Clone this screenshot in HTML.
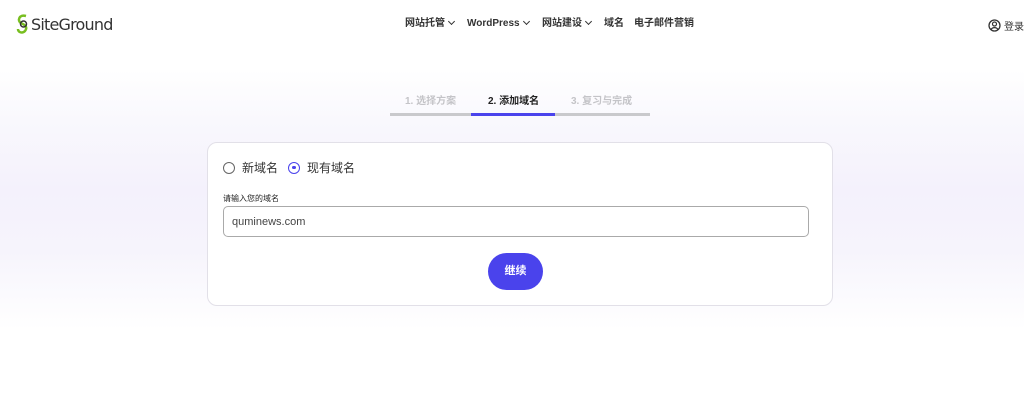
<!DOCTYPE html>
<html><head><meta charset="utf-8">
<style>
*{box-sizing:border-box;margin:0;padding:0}
html,body{width:1024px;height:409px;overflow:hidden}
body{font-family:"Liberation Sans","Noto Sans CJK SC",sans-serif;color:#222;
background:linear-gradient(to bottom,#fff 0,#fff 70px,#f9f8fd 120px,#f4f1fc 190px,#f6f4fc 250px,#fff 330px,#fff 409px);position:relative}
.logo{position:absolute;left:16px;top:13px;display:flex;align-items:center}
.logo span{font-family:"DejaVu Sans",sans-serif;font-size:16px;color:#333;letter-spacing:-0.8px;margin-left:1px;font-weight:normal}
.nav{position:absolute;top:17px;left:405px;font-size:10px;color:#333;font-weight:bold}
.nav div{position:absolute;white-space:nowrap;height:14px;line-height:14px;top:0}
.chev{display:inline-block;width:5px;height:5px;border-right:1.3px solid #333;border-bottom:1.3px solid #333;transform:rotate(45deg);margin-left:4px;position:relative;top:-2px}
.login{position:absolute;right:0;top:18px;font-size:10px;display:flex;align-items:center;gap:3px;color:#333}
.steps{position:absolute;top:95px;left:391px;width:259px;height:24px;font-size:10px;font-weight:bold}
.steps div{position:absolute;top:0;line-height:14px}
.bar{position:absolute;top:113px;height:3px}
.card{position:absolute;left:207px;top:142px;width:626px;height:164px;background:#fff;border:1px solid #e2e0e8;border-radius:10px}
.radio{position:absolute;top:159px;font-size:12px;display:flex;align-items:center;color:#333}
.rc{width:12px;height:12px;border-radius:50%;border:1.3px solid #666;margin-right:7px;position:relative}
.rc.on{border-color:#4a43ec}
.rc.on:after{content:"";position:absolute;left:3px;top:3px;width:3.5px;height:3.5px;border-radius:50%;background:#4a43ec}
.lbl{position:absolute;left:223px;top:193px;font-size:8px;color:#222}
.inp{position:absolute;left:223px;top:206px;width:586px;height:31px;border:1px solid #aaa;border-radius:5px;font-size:11px;color:#444;padding:9px 0 0 8px;background:#fff}
.btn{position:absolute;left:488px;top:253px;width:55px;height:37px;border-radius:19px;background:#4a43ec;color:#fff;font-size:11px;font-weight:bold;text-align:center;line-height:37px}
</style></head><body>
<div class="logo">
<svg width="14" height="22" viewBox="0 0 14 22"><path d="M10 3 C3 1 1 8 5 10 C9 12 12 14 9 18 C6 21 2 19 2 16" fill="none" stroke="#78be20" stroke-width="2.5"/><circle cx="7.5" cy="11" r="3" fill="none" stroke="#333" stroke-width="1.5"/></svg>
<span>SiteGround</span></div>
<div class="nav">
<div style="left:0">网站托管<i class="chev"></i></div>
<div style="left:62px">WordPress<i class="chev"></i></div>
<div style="left:137px">网站建设<i class="chev"></i></div>
<div style="left:199px">域名</div>
<div style="left:229px">电子邮件营销</div>
</div>
<div class="login"><svg width="13" height="13" viewBox="0 0 13 13"><circle cx="6.5" cy="6.5" r="5.5" fill="none" stroke="#333" stroke-width="1.3"/><circle cx="6.5" cy="5" r="2" fill="none" stroke="#333" stroke-width="1.2"/><path d="M3 10.5 C4.5 8 8.5 8 10 10.5" fill="none" stroke="#333" stroke-width="1.2"/></svg><span>登录</span></div>
<div class="steps">
<div style="left:14px;color:#c4c4c8">1. 选择方案</div>
<div style="left:97px;color:#222">2. 添加域名</div>
<div style="left:180px;color:#c4c4c8">3. 复习与完成</div>
</div>
<div class="bar" style="left:390px;width:81px;background:#c9c9cc"></div>
<div class="bar" style="left:471px;width:84px;background:#4a43ec"></div>
<div class="bar" style="left:555px;width:95px;background:#c9c9cc"></div>
<div class="card"></div>
<div class="radio" style="left:223px"><span class="rc"></span>新域名</div>
<div class="radio" style="left:288px"><span class="rc on"></span>现有域名</div>
<div class="lbl">请输入您的域名</div>
<div class="inp">quminews.com</div>
<div class="btn">继续</div>
</body></html>
